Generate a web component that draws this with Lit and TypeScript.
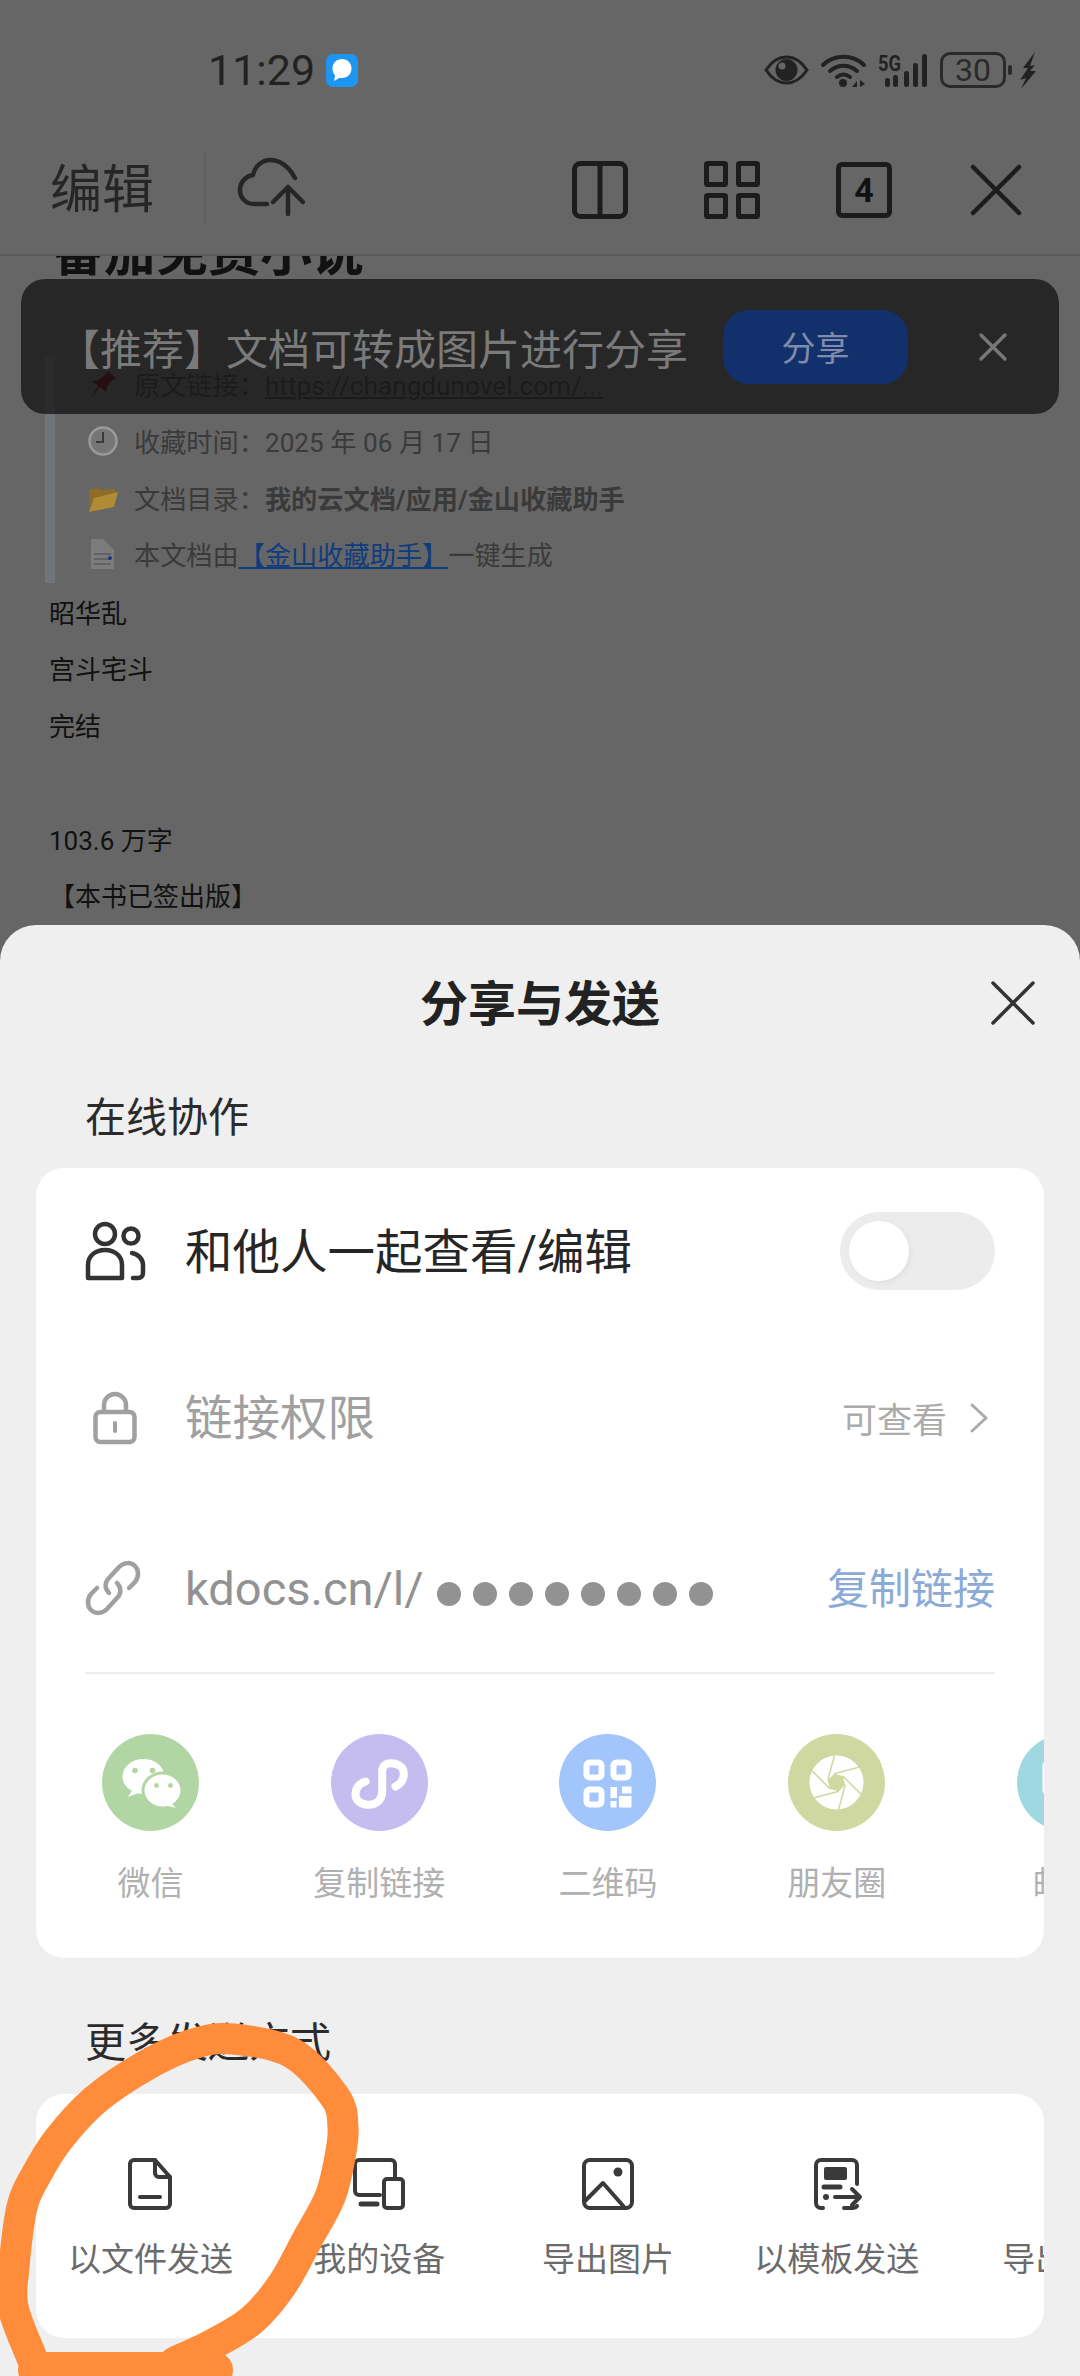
import { LitElement, html, css, svg } from "lit";
import { customElement } from "lit/decorators.js";

const wechat = svg`
  <ellipse cx="41.500" cy="42.500" rx="21" ry="17.500" fill="#fff"/>
  <path fill="#fff" d="M31 55l-5 8 13-5z"/>
  <ellipse cx="60.500" cy="56.500" rx="21" ry="19" fill="#b1d6a3"/>
  <ellipse cx="60.500" cy="56.500" rx="18" ry="16" fill="#fff"/>
  <path fill="#fff" d="M68 68l6 6-12-3z"/>
  <g fill="#b1d6a3"><circle cx="33" cy="36.500" r="2.800"/><circle cx="50.500" cy="36.500" r="2.800"/><circle cx="54.500" cy="51.500" r="2.400"/><circle cx="68.500" cy="51.500" r="2.400"/></g>`;
const mini = svg`<path fill="none" stroke="#fff" stroke-width="8" stroke-linecap="round" d="M34.500 47.500C27 50 24.500 55 24.500 60.800C24.500 67 31 70.800 37.800 70.800C46 70.800 51.200 65 51.200 57.500V37.500C51.200 32 55 29.200 59.500 29.200C67 29.200 72.800 33 72.800 39.200C72.800 46 69 50.500 64.500 52.500"/>`;
const qr = svg`
  <g fill="none" stroke="#fff" stroke-width="6">
    <rect x="27.500" y="28.500" width="15" height="15" rx="3"/>
    <rect x="54.500" y="28.500" width="15" height="15" rx="3"/>
    <rect x="27.500" y="55.500" width="15" height="15" rx="3"/>
  </g>
  <g fill="#fff">
    <rect x="51.500" y="53" width="6.500" height="11"/>
    <rect x="63" y="52.500" width="9.500" height="7"/>
    <rect x="51.500" y="67" width="6" height="6.500"/>
    <rect x="60" y="62" width="12.500" height="11.500"/>
  </g>`;
const blades = [0, 1, 2, 3, 4, 5].map((k) => {
  const t = (k * Math.PI) / 3 + 0.26;
  const vx = 48.5 + 9 * Math.cos(t);
  const vy = 48.5 + 9 * Math.sin(t);
  const ex = vx + 25.5 * Math.cos(t + Math.PI / 2);
  const ey = vy + 25.5 * Math.sin(t + Math.PI / 2);
  return { vx, vy, ex, ey };
});
const aperture = svg`
  <circle cx="48.500" cy="48.500" r="27" fill="#fff"/>
  <g stroke="#d0d8a2" stroke-width="1.500">
    ${blades.map((b) => svg`<line x1=${b.vx} y1=${b.vy} x2=${b.ex} y2=${b.ey}/>`)}
  </g>
  <polygon fill="#d0d8a2" points=${blades.map((b) => `${b.vx},${b.vy}`).join(" ")}/>`;
const mail = svg`<rect x="25.500" y="26" width="46" height="36" rx="6" fill="#fff"/>`;

const shareItems = [
  { label: "微信", bg: "#b1d6a3", icon: wechat },
  { label: "复制链接", bg: "#c5bdf0", icon: mini },
  { label: "二维码", bg: "#a2c5fb", icon: qr },
  { label: "朋友圈", bg: "#d0d8a2", icon: aperture },
  { label: "邮件", bg: "#9fd8e0", icon: mail },
];

const fileI = svg`<path d="M10 2h21l15 17v27a4 4 0 0 1-4 4H10a4 4 0 0 1-4-4V6a4 4 0 0 1 4-4z"/><path d="M31 2v13a4 4 0 0 0 4 4h11"/><path d="M16 39h20"/>`;
const deviceI = svg`<path d="M27 37H6a4 4 0 0 1-4-4V6a4 4 0 0 1 4-4h32a4 4 0 0 1 4 4v13"/><rect x="31" y="21" width="19" height="29" rx="3"/><path d="M8 46h16" stroke-width="5"/>`;
const imageI = svg`<rect x="2" y="2" width="48" height="48" rx="6"/><circle cx="36" cy="14" r="4.500" fill="#3a3a3a" stroke="none"/><path d="M3 43l18-18 22 25"/>`;
const templateI = svg`<path d="M46 26V7a5 5 0 0 0-5-5H10a5 5 0 0 0-5 5v38a5 5 0 0 0 5 5h2M33 50h8a5 5 0 0 0 5-2"/><rect x="13" y="9" width="23" height="13" rx="2" fill="#3a3a3a" stroke="none"/><path d="M13 29h16" stroke-width="5"/><circle cx="15" cy="39" r="3" fill="#3a3a3a" stroke="none"/><path d="M24 39h25M41 31l8 8-8 8"/>`;
const pdfI = svg`<path d="M50 2H30a4 4 0 0 0-4 4v40a4 4 0 0 0 4 4h20"/>`;

const sendItems = [
  { label: "以文件发送", icon: fileI },
  { label: "我的设备", icon: deviceI },
  { label: "导出图片", icon: imageI },
  { label: "以模板发送", icon: templateI },
  { label: "导出PDF", icon: pdfI },
];

// Smooth (Catmull-Rom) line through the points traced from the hand-drawn ring.
const ring: [number, number][] = [
  [32, 2358], [13, 2307], [14, 2267], [22, 2207], [35, 2177], [58, 2140], [95, 2100],
  [145, 2066], [193, 2044], [233, 2039], [292, 2053], [335, 2097], [343, 2127],
  [340, 2157], [330, 2197], [307, 2240], [282, 2285], [252, 2320], [215, 2343], [175, 2362],
];
function smooth(p: [number, number][]): string {
  let d = `M${p[0][0]} ${p[0][1]}`;
  for (let i = 0; i < p.length - 1; i++) {
    const a = p[Math.max(0, i - 1)];
    const b = p[i];
    const c = p[i + 1];
    const e = p[Math.min(p.length - 1, i + 2)];
    d += `C${b[0] + (c[0] - a[0]) / 6} ${b[1] + (c[1] - a[1]) / 6} ${c[0] - (e[0] - b[0]) / 6} ${c[1] - (e[1] - b[1]) / 6} ${c[0]} ${c[1]}`;
  }
  return d;
}

@customElement("app-root")
export class AppRoot extends LitElement {
  static styles = css`
    :host {
      display: block;
      width: 1080px;
      height: 2376px;
      overflow: hidden;
      position: relative;
      background: #666666;
      font-family: Roboto, "Noto Sans CJK SC", sans-serif;
      color: #1f1f1f;
    }
    * { box-sizing: border-box; }
    svg { display: block; flex: none; overflow: visible; }
    .page { display: flex; flex-direction: column; height: 2376px; }

    .status {
      height: 126px;
      padding: 14px 43px 0 208px;
      display: flex;
      align-items: center;
      flex: none;
    }
    .time { font-size: 43px; color: #222; width: 118px; }
    .badge {
      width: 32px; height: 33px; border-radius: 7px; background: #1c96f0;
      display: flex; align-items: center; justify-content: center;
    }
    .sys { margin-left: auto; display: flex; align-items: center; gap: 12px; }
    .batt { display: flex; align-items: center; gap: 2px; }
    .batt-box {
      width: 66px; height: 36px; border: 3px solid #2a2a2a; border-radius: 10px;
      font-size: 32px; line-height: 30px; text-align: center; color: #2a2a2a;
    }
    .nub { width: 4px; height: 10px; background: #2a2a2a; border-radius: 2px; }

    .toolbar {
      height: 130px;
      flex: none;
      display: flex;
      align-items: center;
      padding: 0 56px 4px 50px;
      border-bottom: 2px solid #5c5c5c;
    }
    .edit { font-size: 52px; color: #262626; width: 104px; margin-bottom: 6px; white-space: nowrap; }
    .vsep { width: 2px; height: 72px; background: #5f5f5f; margin: 0 32px 0 50px; }
    .tools { margin-left: auto; margin-top: 3px; display: flex; gap: 76px; align-items: center; }
    .four {
      width: 56px; height: 56px; border: 5px solid #1c1c1c; border-radius: 6px;
      font-size: 34px; font-weight: 700; line-height: 46px; text-align: center; color: #111;
    }

    .doc { flex: 1; overflow: hidden; font-size: 26px; }
    .doc-title {
      font-size: 52px; font-weight: 700; line-height: 60px; color: #111;
      margin: -32px 0 72px 52px; white-space: nowrap;
    }
    .quote { margin: 0 0 3px 45px; border-left: 10px solid #72747c; padding-left: 33px; color: #3a3a3a; font-size: 26.200px; }
    .qrow { height: 56.700px; display: flex; align-items: center; gap: 16px; white-space: pre; }
    .qrow b { font-weight: 700; }
    .qrow a { color: #0f3c7d; text-decoration: underline; }
    .qrow .dim { color: #3a3a3a; text-decoration: underline; }
    .plain { height: 56.700px; line-height: 56.700px; padding-left: 49px; color: #111; white-space: pre; }

    .toast {
      position: absolute; left: 21px; top: 279px; width: 1038px; height: 135px;
      background: rgba(17, 17, 18, 0.73);
      border-radius: 24px;
      display: flex; align-items: center; padding-left: 37px;
    }
    .toast-text { font-size: 42px; color: #7a7a7a; width: 630px; white-space: nowrap; }
    .toast-btn {
      margin-left: 35px; width: 185px; height: 74px; border-radius: 26px; background: #12306b;
      color: #7f8ba8; font-size: 34px; display: flex; align-items: center; justify-content: center;
    }
    .toast-x { margin-left: 70px; }

    .sheet {
      flex: none;
      height: 1451px;
      background: #efefef;
      border-radius: 36px 36px 0 0;
      padding: 0 36px;
    }
    .sheet-head { height: 156px; position: relative; display: flex; align-items: center; justify-content: center; }
    .sheet-title { font-size: 48px; font-weight: 700; color: #222; margin-bottom: 6px; }
    .sheet-x { position: absolute; right: 9px; top: 56px; }
    h3 { margin: 2px 0 15px 49px; font-size: 41px; font-weight: 400; line-height: 70px; color: #2b2b2b; }
    h3.more { margin-top: 50px; margin-bottom: 16px; }
    .card { background: #fff; border-radius: 28px; overflow: hidden; }
    .row { height: 166.500px; padding: 0 49px; display: flex; align-items: center; }
    .row.r3 { height: 170.500px; }
    .ri { width: 100px; flex: none; }
    .ri.low { margin-top: 4px; }
    .rt { font-size: 47.500px; color: #262626; white-space: nowrap; margin-bottom: 6px; }
    .rt.g { color: #a0a0a0; }
    .url { font-size: 47px; color: #929292; margin-top: 4px; }
    .dots { display: flex; gap: 12px; margin-left: 13px; margin-top: 15px; }
    .dots i { width: 24px; height: 24px; border-radius: 50%; background: #929292; }
    .copy { margin-left: auto; margin-bottom: 1px; font-size: 42px; color: #8aaad8; }
    .perm { margin-left: auto; margin-right: 6px; display: flex; align-items: center; gap: 22px; font-size: 35px; color: #ababab; }
    .toggle {
      margin-left: auto; width: 155px; height: 78px; border-radius: 39px; background: #ececec;
      padding: 9px; display: flex;
    }
    .toggle i { width: 60px; height: 60px; border-radius: 50%; background: #fff; box-shadow: 2px 2px 6px rgba(0,0,0,.05); }
    .hr { height: 2px; margin: 0 49px; background: #eeeeee; }
    .items { display: flex; }
    .items.s { padding-top: 60.500px; height: 284.500px; }
    .items.m { padding-top: 64px; height: 244px; }
    .item { flex: none; width: 228.800px; display: flex; flex-direction: column; align-items: center; white-space: nowrap; }
    .circle { width: 97px; height: 97px; border-radius: 50%; }
    .items.s .lab { font-size: 33px; line-height: 44px; margin-top: 30.500px; color: #b0b0b0; }
    .items.m .lab { font-size: 33px; line-height: 44px; margin-top: 28px; color: #6b6b6b; }
    .ic { fill: none; stroke: #3a3a3a; stroke-width: 4; stroke-linecap: round; stroke-linejoin: round; }

    .scribble { position: absolute; left: 0; top: 0; pointer-events: none; }
    .scribble path { fill: none; stroke: #ff8c3a; stroke-linecap: round; stroke-linejoin: round; }
  `;

  render() {
    const dk = "#222";
    return html`
      <div class="page">
        <div class="status">
          <span class="time">11:29</span>
          <span class="badge">
            <svg width="22" height="24" viewBox="0 0 22 24"><path fill="#fff" d="M11 1c5.500 0 9.500 4 9.500 9.500S16.500 20 11 20c-.8 0-1.600-.1-2.300-.3L3 23l1.200-5.500C2.200 15.700 1.500 13.200 1.500 10.500 1.500 5 5.500 1 11 1z"/></svg>
          </span>
          <div class="sys">
            <svg width="45" height="30" viewBox="0 0 45 30"><path fill="none" stroke="${dk}" stroke-width="3" d="M2 15C8 6 15 2 22.500 2S37 6 43 15c-6 9-13 13-20.500 13S8 24 2 15z"/><circle cx="22.500" cy="15" r="11" fill="${dk}"/><circle cx="18" cy="11" r="3.500" fill="#666"/></svg>
            <svg width="45" height="33" viewBox="0 0 45 33"><g fill="none" stroke="${dk}" stroke-width="4" stroke-linecap="round"><path d="M2 11C13 0 32 0 43 11"/><path d="M9 17c8-7 19-7 27 0"/><path d="M16 23c4-3 9-3 13 0"/></g><circle cx="22" cy="29" r="4" fill="${dk}"/><path fill="${dk}" d="M31 33l5-6v6zM39 26l5 4-5 3z"/></svg>
            <svg width="50" height="33" viewBox="0 0 50 33"><text x="0" y="17" font-size="22" font-weight="700" fill="${dk}" font-family="Roboto" textLength="23" lengthAdjust="spacingAndGlyphs">5G</text><g fill="${dk}"><rect x="7" y="24" width="5" height="9" rx="2.500"/><rect x="15" y="21" width="5" height="12" rx="2.500"/><rect x="26" y="17" width="5" height="16" rx="2.500"/><rect x="35" y="9" width="5" height="24" rx="2.500"/><rect x="44" y="0" width="5" height="33" rx="2.500"/></g></svg>
            <div class="batt"><div class="batt-box">30</div><div class="nub"></div></div>
            <svg style="margin-left:-4px" width="17" height="37" viewBox="0 0 17 37"><path fill="${dk}" d="M15 0L3 16h5L0 28l6-2-5 11 15-18h-6l5-6-5 1z"/></svg>
          </div>
        </div>

        <div class="toolbar">
          <span class="edit">编辑</span>
          <span class="vsep"></span>
          <svg width="68" height="62" viewBox="0 0 68 62"><g fill="none" stroke="#262626" stroke-width="4.500" stroke-linecap="round" stroke-linejoin="round"><path d="M29 47H16C8 47 2 41 2 33C2 25 8 19 15 18C17 9 24 3 32 3C44 3 52 12 57 21"/><path d="M50 57V31M35 45L50 30L65 45"/></g></svg>
          <div class="tools">
            <svg width="56" height="58" viewBox="0 0 56 58"><g fill="none" stroke="#1c1c1c" stroke-width="5" stroke-linejoin="round"><rect x="2.500" y="2.500" width="51" height="53" rx="6"/><path d="M28 3v52"/></g></svg>
            <svg width="56" height="58" viewBox="0 0 56 58"><g fill="none" stroke="#1c1c1c" stroke-width="5"><rect x="2.500" y="2.500" width="19" height="21" rx="1"/><rect x="34.500" y="2.500" width="19" height="21" rx="1"/><rect x="2.500" y="34.500" width="19" height="21" rx="1"/><rect x="34.500" y="34.500" width="19" height="21" rx="1"/></g></svg>
            <div class="four">4</div>
            <svg width="56" height="56" viewBox="0 0 56 56"><path fill="none" stroke="#1c1c1c" stroke-width="4.500" stroke-linecap="round" d="M5 5l46 46M51 5L5 51"/></svg>
          </div>
        </div>

        <div class="doc">
          <div class="doc-title">番茄免费小说</div>
          <div class="quote">
            <div class="qrow">
              <svg width="30" height="32" viewBox="0 0 30 32"><path fill="#5a1116" d="M20 3l9 8-5 1-5 7-1 5-6-5-9 11 7-12-6-5 6-1 7-5z"/></svg>
              <span>原文链接：<span class="dim">https://changdunovel.com/...</span></span>
            </div>
            <div class="qrow">
              <svg width="30" height="32" viewBox="0 0 30 32"><circle cx="15" cy="16" r="13.500" fill="#767676" stroke="#9a9a9a" stroke-width="2.500"/><path fill="none" stroke="#3a3a3a" stroke-width="2" d="M15 7v10H8"/></svg>
              <span>收藏时间：2025 年 06 月 17 日</span>
            </div>
            <div class="qrow">
              <svg width="30" height="30" viewBox="0 0 30 30"><path fill="#8d6d28" d="M1 6l10-1 3 2 13-1 1 8-24 4-3 9z"/><path fill="#b08a35" d="M1 29l5-14 24-6-4 15z"/></svg>
              <span>文档目录：<b>我的云文档/应用/金山收藏助手</b></span>
            </div>
            <div class="qrow">
              <svg width="30" height="32" viewBox="0 0 30 32"><path fill="#7c7c7c" d="M3 1h12l11 11v19H3z"/><path stroke="#5a5a5a" stroke-width="1.500" d="M6 16h17M6 21h17M6 26h17"/><circle cx="22" cy="20" r="2" fill="#223388"/></svg>
              <span>本文档由<a>【金山收藏助手】</a>一键生成</span>
            </div>
          </div>
          <div class="plain">昭华乱</div>
          <div class="plain">宫斗宅斗</div>
          <div class="plain">完结</div>
          <div class="plain"> </div>
          <div class="plain">103.6 万字</div>
          <div class="plain">【本书已签出版】</div>
        </div>

        <div class="sheet">
          <div class="sheet-head">
            <span class="sheet-title">分享与发送</span>
            <svg class="sheet-x" width="44" height="44" viewBox="0 0 44 44"><path fill="none" stroke="#333" stroke-width="3.500" stroke-linecap="round" d="M2 2l40 40M42 2L2 42"/></svg>
          </div>
          <h3>在线协作</h3>
          <div class="card">
            <div class="row">
              <div class="ri">
                <svg width="60" height="60" viewBox="0 0 60 60"><g fill="none" stroke="#333" stroke-width="4.500" stroke-linecap="round" stroke-linejoin="round"><circle cx="20" cy="13" r="10"/><circle cx="46" cy="15" r="7.500"/><path d="M3 57V44c0-9 7-15 17-15s17 6 17 15v13z"/><path d="M47 32c6 1 11 6 11 12v8c0 3-2 5-5 5h-5"/></g></svg>
              </div>
              <span class="rt">和他人一起查看/编辑</span>
              <div class="toggle"><i></i></div>
            </div>
            <div class="row">
              <div class="ri">
                <svg style="margin-left:8px" width="44" height="52" viewBox="0 0 44 52"><g fill="none" stroke="#a0a0a0" stroke-width="4.500" stroke-linejoin="round"><rect x="2.500" y="20" width="39" height="30" rx="5"/><path d="M11 20v-7a11 11 0 0 1 22 0v7"/></g><path stroke="#a0a0a0" stroke-width="4" stroke-linecap="round" d="M22 31v8"/></svg>
              </div>
              <span class="rt g">链接权限</span>
              <div class="perm">
                <span>可查看</span>
                <svg width="20" height="32" viewBox="0 0 20 32"><path fill="none" stroke="#ababab" stroke-width="3" stroke-linecap="round" stroke-linejoin="round" d="M3 3l14 13L3 29"/></svg>
              </div>
            </div>
            <div class="row r3">
              <div class="ri low">
                <svg width="56" height="56" viewBox="0 0 56 56"><g fill="none" stroke="#a0a0a0" stroke-width="4.500" stroke-linecap="round"><path d="M24 33c-5-5-4-11 0-15l10-11c5-5 12-5 16-1s4 11 0 16l-6 6"/><path d="M32 23c5 5 4 11 0 15L22 49c-5 5-12 5-16 1s-4-11 0-16l6-6"/></g></svg>
              </div>
              <span class="url">kdocs.cn/l/</span>
              <div class="dots">${Array.from({ length: 8 }, () => html`<i></i>`)}</div>
              <span class="copy">复制链接</span>
            </div>
            <div class="hr"></div>
            <div class="items s">
              ${shareItems.map(
                (it) => html`<div class="item">
                  <div class="circle" style="background:${it.bg}">
                    <svg width="97" height="97" viewBox="0 0 97 97">${it.icon}</svg>
                  </div>
                  <span class="lab">${it.label}</span>
                </div>`
              )}
            </div>
          </div>
          <h3 class="more">更多发送方式</h3>
          <div class="card">
            <div class="items m">
              ${sendItems.map(
                (it) => html`<div class="item">
                  <svg class="ic" width="52" height="52" viewBox="0 0 52 52">${it.icon}</svg>
                  <span class="lab">${it.label}</span>
                </div>`
              )}
            </div>
          </div>
        </div>
      </div>

      <div class="toast">
        <span class="toast-text">【推荐】文档可转成图片进行分享</span>
        <span class="toast-btn">分享</span>
        <svg class="toast-x" width="30" height="30" viewBox="0 0 30 30"><path fill="none" stroke="#777" stroke-width="3.500" stroke-linecap="round" d="M3 3l24 24M27 3L3 27"/></svg>
      </div>

      <svg class="scribble" width="1080" height="2376" viewBox="0 0 1080 2376">
        <path stroke-width="31" d=${smooth(ring)}/>
        <path stroke-width="36" d="M36 2370H215"/>
      </svg>
    `;
  }
}
